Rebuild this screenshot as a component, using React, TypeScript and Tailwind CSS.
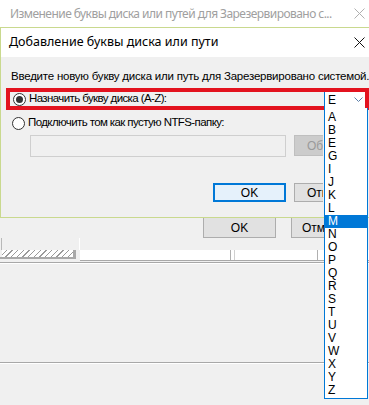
const letters = ['A', 'B', 'E', 'G', 'I', 'J', 'K', 'L', 'M', 'N', 'O', 'P', 'Q', 'R', 'S', 'T', 'U', 'V', 'W', 'X', 'Y', 'Z'];

const CloseIcon = ({ color }: { color: string }) => (
  <svg width="11" height="11" viewBox="0 0 11 11">
    <path d="M0.5 0.5 L10.5 10.5 M10.5 0.5 L0.5 10.5" stroke={color} strokeWidth="1" />
  </svg>
);

const Radio = ({ checked }: { checked?: boolean }) => (
  <span className="w-[13px] h-[13px] rounded-full border border-[#333] bg-white flex items-center justify-center shrink-0">
    {checked && <span className="w-[7px] h-[7px] rounded-full bg-[#333]" />}
  </span>
);

export default function App() {
  return (
    <div
      className="relative w-[369px] h-[405px] overflow-hidden bg-[#f0f0f0] text-black whitespace-nowrap"
      style={{ fontFamily: '"Liberation Sans", Arial, sans-serif' }}
    >
      {/* Outer window title */}
      <div className="h-[27px] bg-white flex items-center justify-between pl-[10px] pr-[4px]">
        <span className="text-[12px] tracking-[-0.55px] text-[#a0a0a0]" style={{ fontFamily: '"Noto Sans", sans-serif' }}>
          Изменение буквы диска или путей для Зарезервировано с...
        </span>
        <CloseIcon color="#b0b0b0" />
      </div>

      {/* Inner dialog */}
      <div className="border-t border-l border-b border-[#c9d98e]">
        <div className="h-[29px] bg-white flex items-center justify-between pl-[8px] pr-[4px]">
          <span className="text-[12.5px]" style={{ fontFamily: '"Noto Sans", sans-serif' }}>
            Добавление буквы диска или пути
          </span>
          <CloseIcon color="#111" />
        </div>

        <div className="h-[160px] flex flex-col text-[11.5px] tracking-[-0.6px]">
          <div className="mt-[11px] h-[16px] pl-[10px] leading-[16px] tracking-[-0.22px]">
            Введите новую букву диска или путь для Зарезервировано системой.
          </div>

          {/* Red highlight box */}
          <div className="mt-[4px] ml-[5px] h-[22px] border-4 border-[#e3131f] flex items-center justify-between">
            <div className="flex items-center gap-[3px] pl-[3px]">
              <Radio checked />
              <span>Назначить букву диска (A-Z):</span>
            </div>
            <div className="relative z-10 self-start w-[41px] h-[16px] bg-white border-l border-[#0078d7] flex items-center justify-between pl-[3px] pr-[2px] tracking-normal">
              <span className="text-[12px] leading-none">E</span>
              <svg width="9" height="6" viewBox="0 0 9 6">
                <path d="M0.5 0.5 L4.5 4.5 L8.5 0.5" stroke="#5a7ea8" fill="none" strokeWidth="1" />
              </svg>
            </div>
          </div>

          <div className="mt-[5px] h-[16px] flex items-center gap-[3px] pl-[11px]">
            <Radio />
            <span>Подключить том как пустую NTFS-папку:</span>
          </div>

          <div className="mt-[4px] flex gap-[8px] pl-[29px]">
            <div className="w-[256px] h-[22px] border border-[#cfcfcf] bg-[#f0f0f0]" />
            <div className="w-[29px] h-[21px] overflow-hidden bg-[#cccccc] border border-[#bfbfbf] border-r-0 flex items-center pl-[12px] text-[12px] tracking-normal text-[#9a9a9a]">
              Обзор
            </div>
          </div>

          <div className="mt-[26px] flex gap-[8px] pl-[212px] text-[12px] tracking-normal">
            <div className="w-[73px] h-[19px] border-2 border-[#0078d7] bg-[#e5f1fb] flex items-center justify-center">
              OK
            </div>
            <div className="w-[29px] h-[19px] overflow-hidden border border-[#adadad] border-r-0 bg-[#e1e1e1] flex items-center pl-[12px]">
              Отмена
            </div>
          </div>
        </div>
      </div>

      {/* Outer dialog buttons */}
      <div className="h-[20px] flex gap-[15px] pl-[203px] text-[12px]">
        <div className="w-[73px] h-[20px] border border-[#adadad] border-t-0 bg-[#e1e1e1] flex items-center justify-center">
          OK
        </div>
        <div className="w-[33px] h-[20px] overflow-hidden border border-[#adadad] border-t-0 border-r-0 bg-[#e1e1e1] flex items-center pl-[10px]">
          Отмена
        </div>
      </div>

      {/* Disk management area behind */}
      <div className="h-[12px] flex">
        <div className="w-[2px] border-r border-[#b8b8b8]" />
        <div className="w-[77px]" />
        <div className="w-[1px] bg-white" />
      </div>
      <div className="h-[12px] flex items-start">
        <div className="w-[76px] h-[9px] border-r-[3px] border-b-[2px] border-[#a8a8a8] pl-[2px]">
          <div
            className="h-[7px] bg-white"
            style={{
              backgroundImage:
                'repeating-linear-gradient(135deg, #ffffff 0px, #ffffff 3px, #9a9a9a 3px, #9a9a9a 4px)',
            }}
          />
        </div>
        <div className="ml-[4px] flex-1 h-[11px] bg-white border-b border-[#a8a8a8] flex">
          <div className="w-[150px]" />
          <div className="w-[1px] bg-[#b0b0b0]" />
          <div className="w-[3px]" />
          <div className="w-[1px] bg-[#d0d0d0]" />
          <div className="w-[82px]" />
          <div className="w-[1px] bg-[#b0b0b0]" />
        </div>
      </div>
      <div className="h-[1px] bg-[#a8a8a8]" />
      <div className="h-[1px] bg-white" />
      <div className="h-[98px]" />
      <div className="h-[1px] bg-[#a8a8a8]" />
      <div className="h-[1px] bg-white" />

      {/* Open drop-down list */}
      <div className="absolute left-[324px] top-[108px] w-[44px] h-[291px] bg-white border border-[#0078d7] border-t-0 pt-[3px]">
        {letters.map((l) => (
          <div
            key={l}
            className={`h-[13px] leading-[13px] pl-[3px] text-[12px] ${l === 'M' ? 'bg-[#0078d7] text-white' : 'text-black'}`}
          >
            {l}
          </div>
        ))}
      </div>
    </div>
  );
}
